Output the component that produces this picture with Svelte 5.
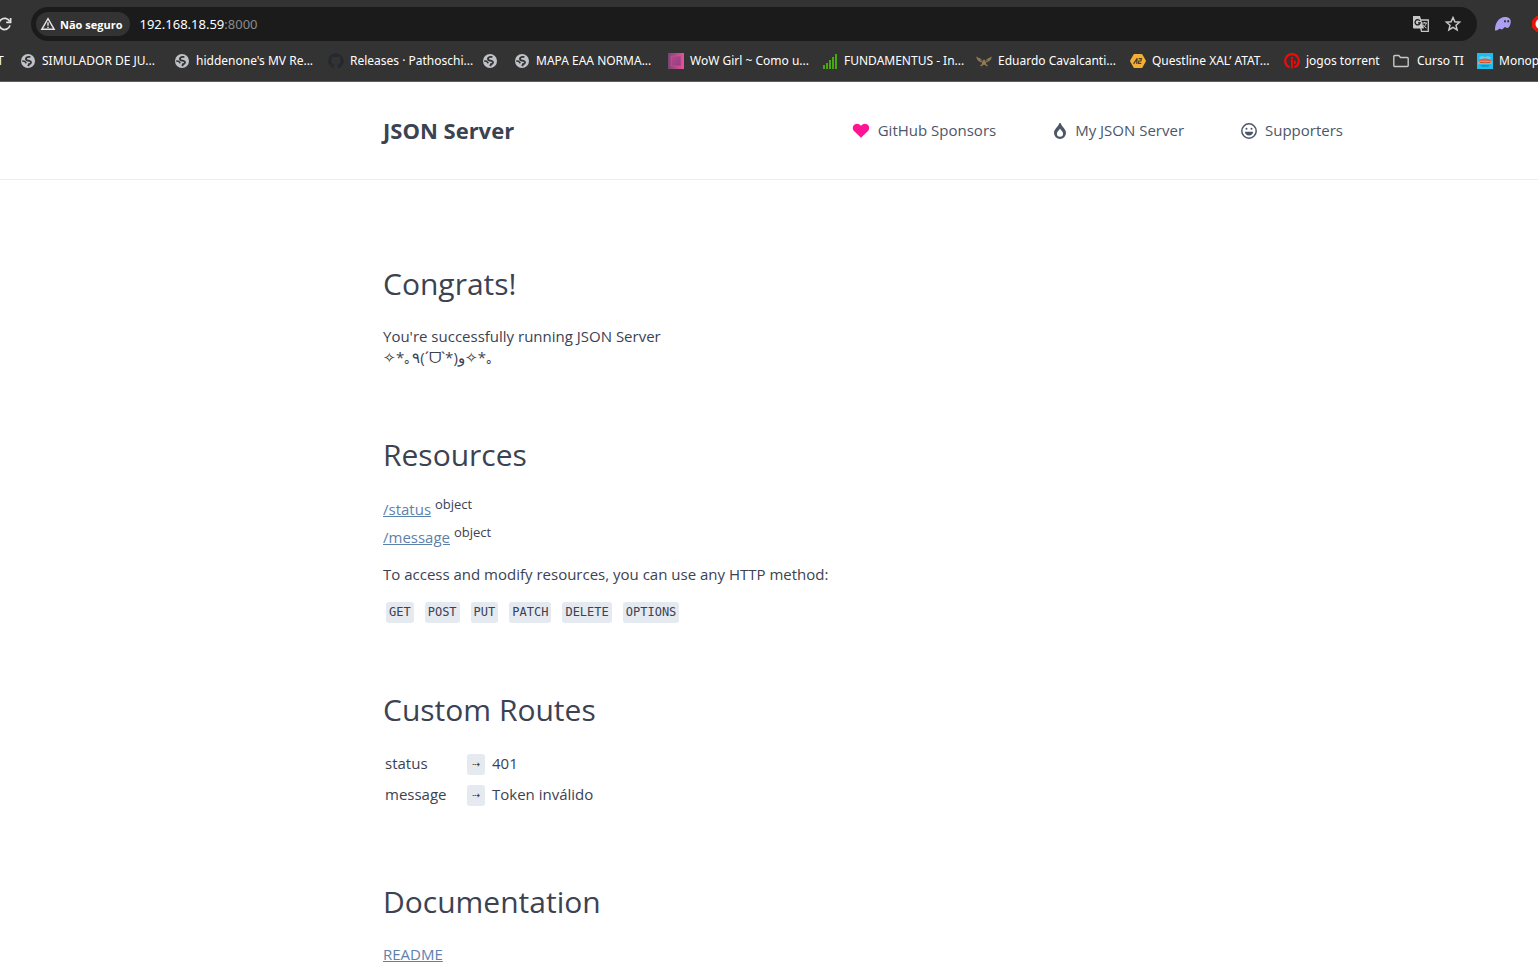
<script>
  const bookmarks = [
    { icon: 'globe', label: 'SIMULADOR DE JU...' },
    { icon: 'globe', label: "hiddenone's MV Re..." },
    { icon: 'github', label: 'Releases · Pathoschi...' },
    { icon: 'globe', label: '', size: 'bare' },
    { icon: 'globe', label: 'MAPA EAA NORMA...' },
    { icon: 'wow', label: 'WoW Girl ~ Como u...' },
    { icon: 'bars', label: 'FUNDAMENTUS - In...' },
    { icon: 'eagle', label: 'Eduardo Cavalcanti...' },
    { icon: 'hex', label: 'Questline XAL’ ATAT...' },
    { icon: 'torrent', label: 'jogos torrent', size: 'medium' },
    { icon: 'folder', label: 'Curso TI', size: 'small' },
    { icon: 'monopoly', label: 'Monop' }
  ];

  const resources = ['status', 'message'];
  const methods = ['GET', 'POST', 'PUT', 'PATCH', 'DELETE', 'OPTIONS'];
  const routes = [
    ['status', '401'],
    ['message', 'Token inválido']
  ];
</script>

<div class="browser">
  <div class="toolbar">
    <button class="reload" aria-label="Recarregar">
      <svg width="16" height="16" viewBox="0 0 16 16" fill="none" stroke="#e3e3e3" stroke-width="1.7">
        <path d="M13.6 5.4A5.6 5.6 0 1 0 14 9.4" />
        <path d="M14.6 2V6.4H10.2" />
      </svg>
    </button>
    <div class="omnibox">
      <button class="security">
        <svg width="16" height="16" viewBox="0 0 16 16" fill="none" stroke="#e3e3e3" stroke-width="1.4">
          <path d="M8 2.6 14.2 13.3H1.8Z" />
          <path d="M8 6.2v3.6M8 10.7v1.3" />
        </svg>
        Não seguro
      </button>
      <div class="url">192.168.18.59<span>:8000</span></div>
      <button class="tool" aria-label="Traduzir">
        <svg width="18" height="18" viewBox="0 0 18 18">
          <path d="M7 5h9.3v11.3H9.5z" fill="none" stroke="#c7c7c7" stroke-width="1.3" />
          <path d="M1 1h7l3.8 12.5H2a1 1 0 0 1-1-1z" fill="#c7c7c7" />
          <path d="M7.8 5.8A2.6 2.6 0 1 0 8.2 7.8H6" fill="none" stroke="#1b1b1b" stroke-width="1.3" />
          <path d="M10 8h5M12.5 7v1M14.2 8c-.4 2-1.6 3.4-3 4.4M11 9.5c.8 1.6 2 2.8 3.5 3.6" fill="none" stroke="#c7c7c7" stroke-width="1" />
        </svg>
      </button>
      <button class="tool" aria-label="Favoritar">
        <svg width="18" height="18" viewBox="0 0 18 18" fill="none" stroke="#c7c7c7" stroke-width="1.5">
          <path d="m9 2.5 1.9 4.3 4.7.4-3.6 3.1 1.1 4.6L9 12.4l-4.1 2.5L6 10.3 2.4 7.2l4.7-.4z" />
        </svg>
      </button>
    </div>
    <button class="ghost" aria-label="Extensão">
      <svg width="18" height="16" viewBox="0 0 18 16">
        <path d="M1 14.4C.7 8 4.5 1 11 1c4 0 6.2 2.2 5.7 5.4-.4 2.6-1.6 5.6-3.6 5.6-1.2 0-1.2-1-2.2-1s-1.5 2.5-3.2 2.5c-1 0-1.2-.7-2-.7-1.2 0-2.3 2.4-4.7 1.6z" fill="#ab9ff2" />
        <ellipse cx="11" cy="5.2" rx=".9" ry="1.3" fill="#333" />
        <ellipse cx="14.2" cy="5.2" rx=".9" ry="1.3" fill="#333" />
      </svg>
    </button>
    <button class="ext" aria-label="Bloqueador">
      <svg width="18" height="18" viewBox="0 0 18 18">
        <path d="M5.5 1h7L17 5.5v7L12.5 17h-7L1 12.5v-7z" fill="#e8130c" />
        <path d="M9 4a4.5 5 0 0 0 0 10z" fill="#fff" />
      </svg>
    </button>
  </div>

  <nav class="bookmarks">
    <a class="cut" href="/">T</a>
    {#each bookmarks as b}
      <a class="bookmark {b.size || ''}" href="/" aria-label={b.label || 'Favorito'}>
        <svg width="16" height="16" viewBox="0 0 16 16">
          {#if b.icon === 'globe'}
            <circle cx="8" cy="8" r="7" fill="#bfc3c8" />
            <path d="M10.4 3.9H8.6C5.4 4 5.200 6.900 7.600 7.500L9.400 7.900C11.800 8.600 11.400 10.800 9 11.200L8.200 13.200" fill="none" stroke="#333" stroke-width="1.900" />
            <path d="M2.200 8.100 4.500 8.300 6.400 10.200" fill="none" stroke="#333" stroke-width="1.500" />
          {:else if b.icon === 'github'}
            <path d="M8 .3a7.7 7.7 0 0 0-2.5 15c.4.1.5-.2.5-.4v-1.5c-2.100.5-2.600-.9-2.600-.9-.4-.9-.9-1.100-.9-1.100-.7-.5.1-.5.1-.5.8.1 1.200.8 1.200.8.7 1.200 1.800.9 2.300.7 0-.5.3-.9.5-1.100-1.700-.2-3.500-.9-3.500-3.800 0-.9.3-1.500.8-2.100-.1-.2-.4-1 .1-2.100 0 0 .7-.2 2.100.8a7 7 0 0 1 3.800 0c1.500-1 2.100-.8 2.100-.8.5 1.100.2 1.900.1 2.100.5.6.8 1.200.8 2.100 0 2.900-1.800 3.600-3.500 3.800.3.2.5.7.5 1.400v2.200c0 .2.1.5.5.4A7.7 7.7 0 0 0 8 .3z" fill="#24292e" />
          {:else if b.icon === 'wow'}
            <defs>
              <linearGradient id="wow"><stop stop-color="#754573" /><stop offset="1" stop-color="#ee4f9c" /></linearGradient>
              <linearGradient id="wow-in" x2="1" y2="1"><stop stop-color="#bb478b" /><stop offset="1" stop-color="#8b417f" /></linearGradient>
            </defs>
            <path d="M0 0h16v16H0z" fill="url(#wow)" />
            <path d="M3 3h10v10H3z" fill="url(#wow-in)" stroke="#d9529a" stroke-width=".6" />
          {:else if b.icon === 'bars'}
            <path d="M1 12h2v4H1zM4 10h2v6H4zM7 7h2v9H7zM10 4h2v12h-2zM13 1h2v15h-2z" fill="#48a60f" />
          {:else if b.icon === 'eagle'}
            <path d="M0 3.5 5 6l1.700 2L8 6.300 9.500 8 11 6l5-2.500-1.300 3.200-3 2.300-2 .5.8 2 2 .8-2.200.6L8 11.500 6 13l-2.500-.6 2-.9.8-2-2.300-.5-2.500-2z" fill="#937b54" />
            <path d="m4 7 2.500 1.500M12 7 9.500 8.500M5 14.200h1.500M10 14.200h1.500" stroke="#564a38" />
          {:else if b.icon === 'hex'}
            <path d="M4.500 1h7a1 1 0 0 1 .9.5l3.300 5.700a1.500 1.500 0 0 1 0 1.500l-3.300 5.800a1 1 0 0 1-.9.5h-7a1 1 0 0 1-.9-.5L.3 8.700a1.500 1.500 0 0 1 0-1.500l3.300-5.700a1 1 0 0 1 .9-.5z" fill="#f3ae35" />
            <path d="M3.600 10.800 7.200 5.400 6.600 10.800M8.600 5.600h2.800L10.900 8H8.700L8.300 10.400h2.900" fill="none" stroke="#4a3b22" stroke-width="1.200" />
          {:else if b.icon === 'torrent'}
            <path d="M5.600 14.300A6.800 6.800 0 1 1 10.400 14.300" fill="none" stroke="#f00b0b" stroke-width="2.200" />
            <path d="M6.500 7.500H8v8M10.800 11.300V7.500" fill="none" stroke="#f00b0b" stroke-width="1.700" />
            <circle cx="8" cy="4.900" r="1.200" fill="#f00b0b" />
          {:else if b.icon === 'folder'}
            <path d="M.8 3.500a1 1 0 0 1 1-1h4L7.500 4.500h6.700a1 1 0 0 1 1 1v7a1 1 0 0 1-1 1H1.800a1 1 0 0 1-1-1z" fill="none" stroke="#c7c7c7" stroke-width="1.400" />
          {:else}
            <path d="M0 0h16v16H0z" fill="#20bdec" />
            <path d="M2 4.500 5 3l3 1 3-1 3 1.500-1 1.700H3z" fill="#5fd0f2" />
            <path d="M1.500 9Q2 5.500 8 5.500T14.500 9z" fill="#e85836" />
            <path d="M1 8.800q7-2 14 0l-.5 2.400q-6.500-1.500-13 0z" fill="#f4a27e" />
            <path d="M2.500 9.700q5.500-1.200 11 0" fill="none" stroke="#b8452f" />
            <path d="M3 12h10l-2 2H5z" fill="#139bc7" />
          {/if}
        </svg>
        {b.label}
      </a>
    {/each}
  </nav>
</div>

<div class="page">
  <header>
    <div class="container bar">
      <strong>JSON Server</strong>
      <nav class="links">
        <a href="/">
          <svg width="18" height="16" viewBox="0 0 18 16"><path d="M9 14.800 2 7.900C.1 5.800.6 2.700 2.700 1.400 4.800.1 7.300.8 9 2.800c1.700-2 4.200-2.700 6.300-1.400 2.100 1.300 2.600 4.400.7 6.500z" fill="#ff1493" /></svg>
          GitHub Sponsors
        </a>
        <a href="/">
          <svg width="14" height="16" viewBox="0 0 14 16"><path fill-rule="evenodd" d="M6.200.5c.3-.6 1.300-.6 1.600 0C9 4 13 6 13 10a6 6 0 0 1-12 0C1 6 5 4 6.200.5zM7 5.500C6 7.500 3.900 8.700 3.900 10.800a3.100 3 0 0 0 6.200 0C10.100 8.700 8 7.500 7 5.500z" fill="#4c566a" /></svg>
          My JSON Server
        </a>
        <a href="/">
          <svg width="16" height="16" viewBox="0 0 16 16"><circle cx="8" cy="8" r="7.200" fill="none" stroke="#4c566a" stroke-width="1.500" /><circle cx="5.500" cy="5.800" r="1" fill="#4c566a" /><circle cx="10.500" cy="5.800" r="1" fill="#4c566a" /><path d="M3.900 8.800h8.200A4.200 4.200 0 0 1 8 12.600a4.200 4.200 0 0 1-4.100-3.800z" fill="#4c566a" /></svg>
          Supporters
        </a>
      </nav>
    </div>
  </header>

  <main class="container">
    <section>
      <h1>Congrats!</h1>
      <p>You're successfully running JSON Server<br />✧*｡٩(ˊᗜˋ*)و✧*｡</p>
    </section>

    <section>
      <h1>Resources</h1>
      <ul>
        {#each resources as name}
          <li><a href="/{name}">/{name}</a> <sup>object</sup></li>
        {/each}
      </ul>
      <p>To access and modify resources, you can use any HTTP method:</p>
      <div class="methods">
        {#each methods as method}
          <code>{method}</code>
        {/each}
      </div>
    </section>

    <section>
      <h1>Custom Routes</h1>
      <table>
        <tbody>
          {#each routes as [from, to]}
            <tr>
              <td>{from}</td>
              <td><code>⇢</code></td>
              <td>{to}</td>
            </tr>
          {/each}
        </tbody>
      </table>
    </section>

    <section>
      <h1>Documentation</h1>
      <p><a href="/">README</a></p>
    </section>
  </main>
</div>

<style>
  :global(body) { margin: 0; background: #fff; }

  .browser {
    background: #333; color: #fff; border-bottom: 1px solid #5f5f5f; overflow: hidden;
    font-family: "Noto Sans", "Open Sans", sans-serif; font-size: 12px;
  }
  button { padding: 0; border: 0; background: none; color: inherit; font: inherit; }
  svg { flex: none; display: block; }
  .toolbar { display: flex; align-items: center; padding-top: 7px; }
  .reload { width: 12px; margin-right: 19px; display: flex; justify-content: flex-end; }
  .omnibox {
    flex: 1; display: flex; align-items: center; gap: 14px; height: 34px;
    padding: 0 15px 0 5px; box-sizing: border-box; border-radius: 17px; background: #1b1b1b;
  }
  .security {
    display: flex; align-items: center; gap: 4px; height: 24px; padding: 0 8px 0 4px;
    border-radius: 12px; background: #333; font-family: "Open Sans", sans-serif;
    font-size: 11px; font-weight: 700; white-space: nowrap;
  }
  .url { flex: 1; margin-left: -5px; font-size: 13px; }
  .url span { color: #8b8b8b; }
  .ghost { margin-left: 17px; }
  .ext { width: 7px; margin-left: 19px; }

  .bookmarks { display: flex; align-items: center; height: 40px; padding-bottom: 1px; box-sizing: border-box; }
  .bookmarks a { color: #fff; text-decoration: none; white-space: nowrap; }
  .cut { flex: none; width: 20px; text-indent: -3px; }
  .bookmark { flex: none; display: flex; align-items: center; gap: 6px; width: 154px; }
  .bare { width: 32px; }
  .medium { width: 109px; }
  .small { width: 84px; gap: 8px; }

  .page { color: #3b4252; font-family: "Open Sans", "Noto Sans", sans-serif; font-size: 15px; line-height: 21px; }
  .container { margin: 0 195px 0 383px; }
  header { border-bottom: 1px solid #eceff1; }
  .bar { display: flex; align-items: center; justify-content: space-between; height: 97px; }
  .bar strong { font-size: 22px; }
  .links { display: flex; gap: 57px; }
  .links a { display: flex; align-items: center; gap: 8px; color: #4c566a; text-decoration: none; }

  main { padding-top: 82px; }
  section + section { margin-top: 65px; }
  h1 { margin: 0 0 21px; font-size: 30px; font-weight: 400; line-height: 43px; }
  p, ul { margin: 0; padding: 0; }
  ul { list-style: none; margin: -2px 0 13px; line-height: 28px; }
  main a { color: #5e81ac; }
  sup { font-size: 13px; line-height: 0; vertical-align: 6px; }
  .methods { display: flex; gap: 11px; margin: 17px 3px 0; }
  code {
    display: inline-block; padding: 0 3px; border-radius: 3px; background: #e5e9f0;
    font-family: "DejaVu Sans Mono", monospace; font-size: 12px;
  }
  table { margin: -4px 0 70px; border-spacing: 0; }
  td { height: 31px; padding: 0 5px 0 2px; }
  td:first-child { width: 75px; }
  td code { width: 12px; text-align: center; }
</style>
